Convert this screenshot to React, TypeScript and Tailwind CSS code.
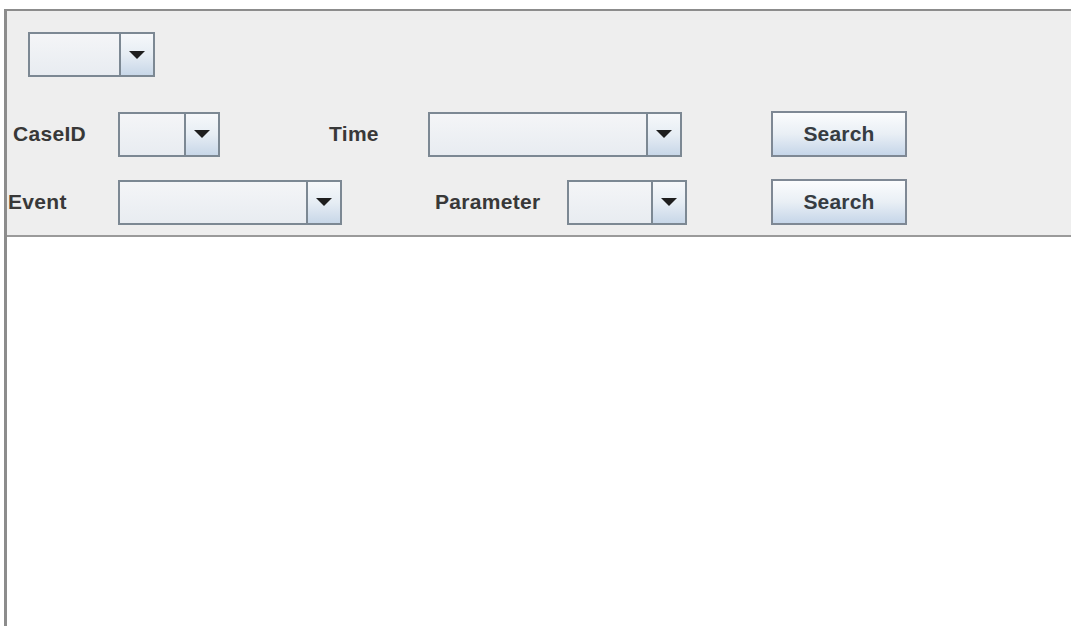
import React from "react";

// Swing-style combo box: empty text field plus a gradient arrow button
const ComboBox = ({ className }: { className: string }) => {
  return (
    <div className={`flex h-[45px] border-2 border-[#7c8893] ${className}`}>
      <div className="flex-1 bg-linear-to-b from-[#f4f5f7] to-[#e8ecf1]" />
      <div className="flex w-[34px] items-center justify-center border-l-2 border-[#7c8893] bg-linear-to-b from-[#f6f8fa] via-[#e6edf4] to-[#c8d7e8]">
        <svg width="16" height="8" viewBox="0 0 16 8">
          <polygon points="0,0 16,0 8,8" fill="#1e1e1e" />
        </svg>
      </div>
    </div>
  );
};

const SearchButton = ({ className }: { className: string }) => {
  return (
    <button
      type="button"
      className={`flex h-[46px] w-[136px] items-center justify-center border-2 border-[#7e8894] bg-linear-to-b from-[#fbfcfd] via-[#e9eff5] to-[#c6d6e9] text-[21px] font-bold tracking-[0.2px] text-[#363c42] ${className}`}
    >
      Search
    </button>
  );
};

const App: React.FC = () => {
  return (
    <div className="h-[626px] w-[1071px] overflow-hidden bg-white pl-[4px] pt-[9px] font-['Liberation_Sans',Arial,sans-serif]">
      <div className="flex h-full flex-col border-l-[3px] border-t-2 border-[#8c8c8c]">
        {/* search panel */}
        <div className="flex flex-col border-b-2 border-[#9a9a9a] bg-[#eeeeee] pb-[10px] pt-[21px]">
          <div className="flex h-[45px] items-center">
            <ComboBox className="ml-[21px] w-[127px]" />
          </div>

          <div className="mt-[34px] flex h-[46px] items-center text-[21px] font-bold tracking-[0.3px] text-[#383838]">
            <div className="w-[111px] pl-[6px]">CaseID</div>
            <ComboBox className="w-[102px]" />
            <div className="w-[208px] pl-[109px]">Time</div>
            <ComboBox className="w-[254px]" />
            <SearchButton className="ml-[89px]" />
          </div>

          <div className="mt-[22px] flex h-[46px] items-center text-[21px] font-bold tracking-[0.3px] text-[#383838]">
            <div className="w-[111px] pl-[1px]">Event</div>
            <ComboBox className="w-[224px]" />
            <div className="w-[225px] pl-[93px]">Parameter</div>
            <ComboBox className="w-[120px]" />
            <SearchButton className="ml-[84px]" />
          </div>
        </div>

        {/* results area */}
        <div className="flex-1 bg-white" />
      </div>
    </div>
  );
};

export default App;
